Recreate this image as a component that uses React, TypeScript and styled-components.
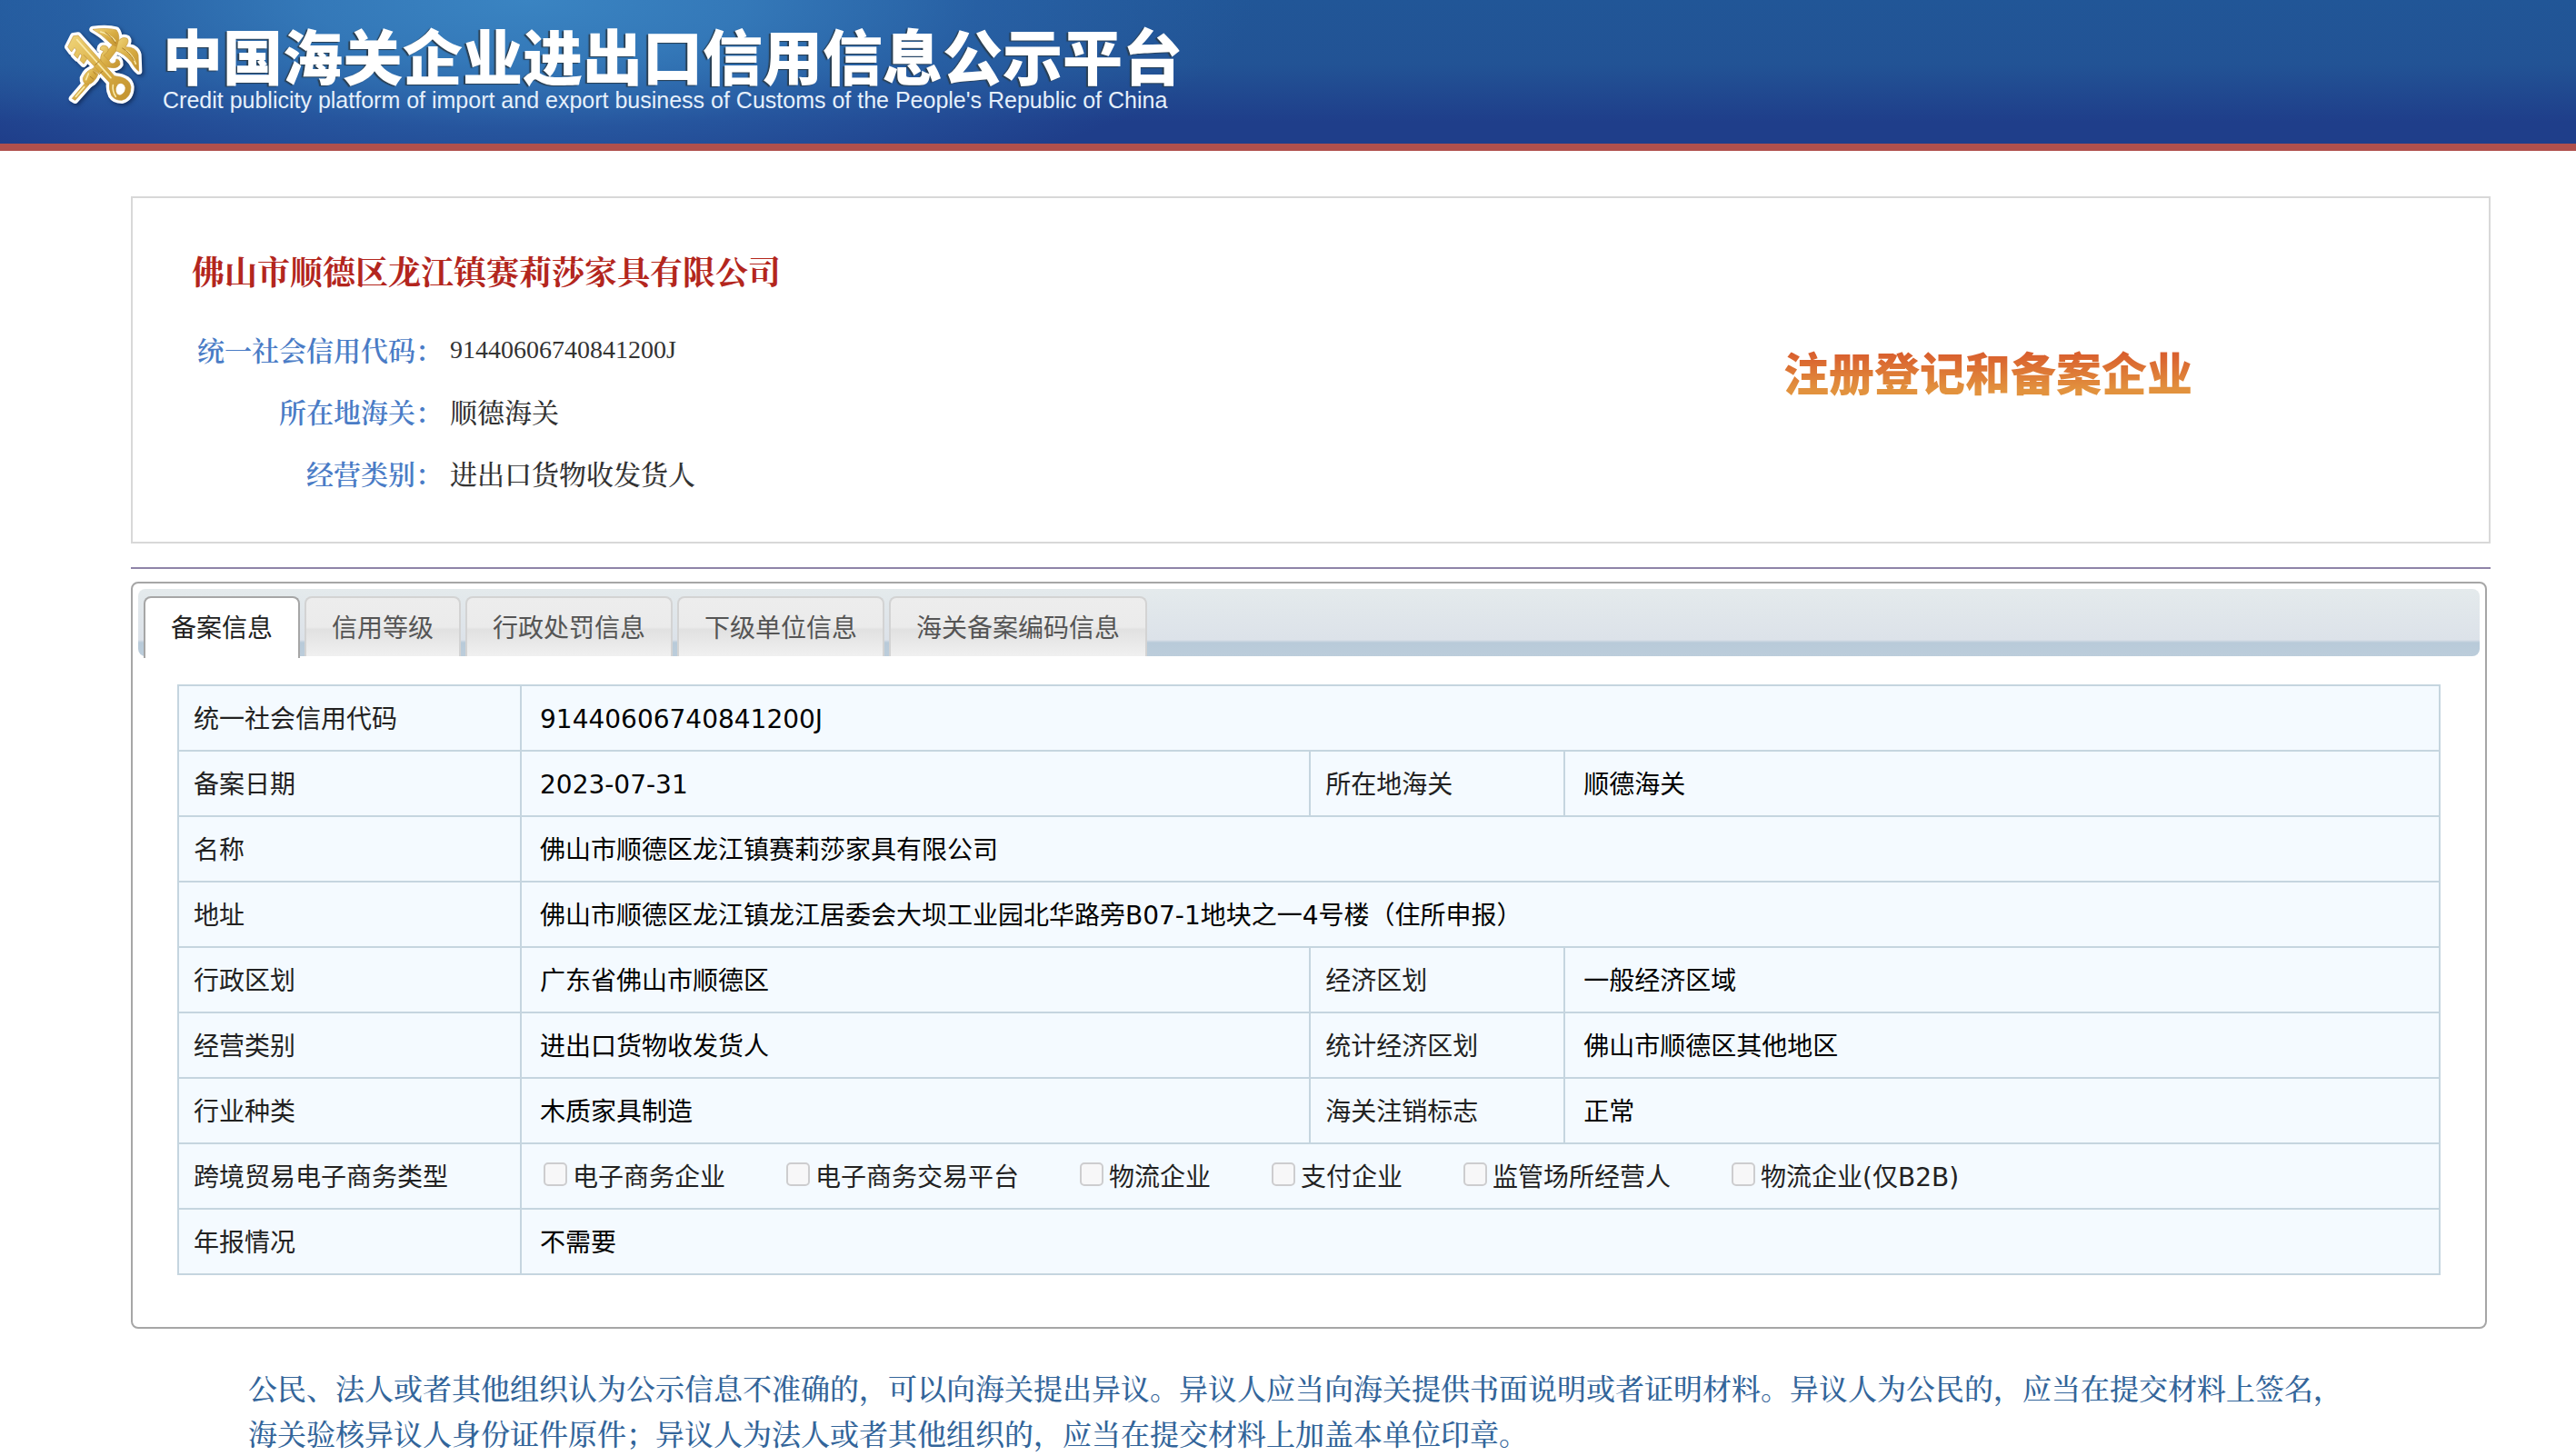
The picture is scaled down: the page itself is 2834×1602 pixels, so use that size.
import React, { useState } from "react";
import styled, { createGlobalStyle, css } from "styled-components";

const serif = `"Liberation Serif", "Songti SC", "Noto Serif CJK SC", "Noto Sans CJK SC", serif`;
const sans = `"DejaVu Sans", "Noto Sans CJK SC", sans-serif`;

const GlobalStyle = createGlobalStyle`
  *, *::before, *::after { box-sizing: border-box; }
  body { margin: 0; background: #fff; }
`;

const Header = styled.header`
  display: flex;
  align-items: flex-start;
  gap: 21px;
  padding: 27px 70px 29px;
  border-bottom: 8px solid #b0504c;
  background:
    radial-gradient(ellipse 800px 230px at 580px 0, #3a84c2 0%, rgba(54, 124, 188, 0.9) 30%, rgba(44, 104, 174, 0.55) 62%, rgba(32, 80, 148, 0) 100%),
    linear-gradient(#215697, #225395 45%, #1f3e8a 85%, #1f3e8a);
`;

const Emblem = styled.svg`
  flex: none;
  width: 88px;
  height: 88px;
  filter: drop-shadow(2px 2px 2px rgba(10, 25, 60, 0.6));
`;

const Brand = styled.div`
  display: flex;
  flex-direction: column;
  white-space: nowrap;
`;

const BrandName = styled.h1`
  margin: 0;
  font: 900 66px/64px "Noto Sans CJK SC", sans-serif;
  color: #fff;
  text-shadow: -2px 1px 1px #2a3f52;
`;

const BrandSub = styled.p`
  margin: 0;
  font: 400 25px/38px "Liberation Sans", sans-serif;
  color: #e6f0fb;
`;

const Main = styled.main`
  padding: 50px 94px 0 144px;
`;

const Summary = styled.section`
  display: grid;
  grid-template-columns: 1fr 776px;
  padding: 61px 0 39px 65px;
  border: 2px solid #d8d8d8;
`;

const Company = styled.h2`
  margin: 0 0 30px;
  font: 700 36px/44px ${serif};
  color: #b3261d;
`;

const Facts = styled.dl`
  display: grid;
  grid-template-columns: 276px 1fr;
  column-gap: 8px;
  margin: 0;
  font-family: ${serif};
  font-weight: 500;
  line-height: 68px;
`;

const FactName = styled.dt`
  font-size: 30px;
  font-weight: 600;
  text-align: right;
  color: #4a7cc6;
`;

const FactValue = styled.dd<{ $code?: boolean }>`
  margin: 0;
  font-size: ${(p) => (p.$code ? 28 : 30)}px;
  line-height: ${(p) => (p.$code ? 64 : 68)}px;
  color: #333;
`;

const Badge = styled.strong`
  align-self: center;
  justify-self: start;
  margin-bottom: 20px;
  font: 900 50px/60px "Noto Sans CJK SC", sans-serif;
  color: transparent;
  background: linear-gradient(#d9602e 20%, #e2923e 85%);
  background-clip: text;
  -webkit-background-clip: text;
`;

const Divider = styled.hr`
  height: 2px;
  margin: 26px 0 14px;
  border: 0;
  background: #8f84a8;
`;

const Panel = styled.section`
  margin-right: 4px;
  padding: 6px 6px 57px;
  border: 2px solid #a6a6a6;
  border-radius: 8px;
`;

const TabStrip = styled.div`
  display: flex;
  gap: 5px;
  height: 74px;
  padding: 8px 6px 0;
  border-radius: 8px;
  background: linear-gradient(#e4eaec, #dce2e9 56px, #b8cad9 59px, #bccddb);
`;

const Tab = styled.button<{ $active: boolean }>`
  height: 66px;
  padding: 4px 28px 0;
  border: 2px solid #d3d3d3;
  border-bottom: 0;
  border-radius: 8px 8px 0 0;
  font: 400 28px/40px ${sans};
  color: #555;
  background: linear-gradient(#ededed, #ebebeb 50%, #e1e1e1 54%, #f0f0f0);
  ${(p) =>
    p.$active &&
    css`
      height: 68px;
      padding-bottom: 2px;
      border-color: #a6a6a6;
      color: #212121;
      background: #fff;
    `}
`;

const TableWrap = styled.div`
  padding: 31px 43px 0;
`;

const Table = styled.table`
  width: 100%;
  table-layout: fixed;
  border-collapse: collapse;
  background: #f4faff;
  font: 400 28px/40px ${sans};
`;

const Col = styled.col<{ $width?: string }>`
  width: ${(p) => p.$width ?? "auto"};
`;

const Label = styled.th`
  height: 72px;
  padding: 4px 16px 0;
  border: 2px solid #c5d5df;
  font-weight: 400;
  text-align: left;
  color: #222;
`;

const Value = styled.td`
  height: 72px;
  padding: 4px 20px 0;
  border: 2px solid #c5d5df;
  color: #000;
`;

const Options = styled.div`
  display: flex;
  gap: 67px;
  padding-left: 4px;
  white-space: nowrap;
`;

const Option = styled.label`
  display: flex;
  gap: 6px;
  color: #222;
`;

const Check = styled.input`
  appearance: none;
  flex: none;
  width: 26px;
  height: 26px;
  margin: 3px 0 0;
  border: 2px solid #cdcdcf;
  border-radius: 5px;
  background: #f7f7f8;
`;

const Notice = styled.p`
  margin: 0;
  padding: 42px 150px 0 129px;
  font: 500 32px/50px ${serif};
  color: #33659a;
`;

const KeyAndWings = () => (
  <>
    <path d="M86 294 L132 240 L142 248 L96 300 Z" />
    <path d="M122 226 Q134 200 154 196 L172 214 Q158 246 136 248 Q120 244 122 226 Z" />
    <path d="M154 196 L230 104 L246 118 L174 212 Z" />
    <path d="M154 66 Q204 60 232 68 Q246 84 238 124 Q220 122 202 102 Q186 84 154 66 Z" />
    <path d="M238 106 Q250 88 268 96 Q276 106 262 124 Q298 124 304 150 L306 204 Q294 196 282 174 Q260 146 230 136 Z" />
    <path d="M178 132 Q180 116 196 120 Q212 126 202 142 L190 152 Q206 164 214 178 Q230 182 232 164 Q244 164 244 182 Q236 196 212 192 L186 188 Q172 156 190 138 Z" />
    <path fillRule="evenodd" d="M106 86 L226 220 Q276 224 280 256 Q280 292 250 300 Q226 300 216 284 Q206 262 210 242 L124 150 L136 162 L124 180 L112 168 L118 152 L112 146 L104 162 L92 150 L100 134 L94 126 L84 140 L72 124 L90 88 Z M238 246 Q256 240 262 258 Q262 276 244 284 Q228 280 230 262 Z" />
  </>
);

const CustomsEmblem = () => (
  <Emblem viewBox="58 50 264 264" role="img" aria-label="海关关徽">
    <defs>
      <linearGradient id="gold" x1="0" y1="0" x2="1" y2="1">
        <stop offset="0" stopColor="#f0d57a" />
        <stop offset="0.5" stopColor="#d9ae45" />
        <stop offset="1" stopColor="#c2922f" />
      </linearGradient>
    </defs>
    <g fill="#fff" stroke="#fff" strokeWidth="22" strokeLinejoin="round">
      <KeyAndWings />
    </g>
    <g fill="url(#gold)" stroke="#c2953a" strokeWidth="2" strokeLinejoin="round">
      <KeyAndWings />
    </g>
    <ellipse cx="246" cy="262" rx="14" ry="17" fill="#fff" />
    <g fill="none" stroke="#f9e9a8" strokeWidth="5" strokeLinecap="round">
      <path d="M102 100 L214 226" />
      <path d="M180 74 Q212 82 228 104" />
      <path d="M264 136 Q286 150 296 180" />
      <path d="M221 250 Q218 270 230 288" />
      <path d="M140 212 L132 232" />
      <path d="M98 288 L126 256" />
    </g>
    <g fill="none" stroke="#a97b2a" strokeWidth="3" strokeLinecap="round">
      <path d="M196 76 Q218 90 230 112" />
      <path d="M252 128 Q276 142 290 168" />
      <path d="M156 206 L164 214 M146 222 L156 230" />
      <path d="M174 172 L162 184 M186 204 L176 214" />
    </g>
  </Emblem>
);

const tabs = ["备案信息", "信用等级", "行政处罚信息", "下级单位信息", "海关备案编码信息"];

const ecommerceTypes = [
  "电子商务企业",
  "电子商务交易平台",
  "物流企业",
  "支付企业",
  "监管场所经营人",
  "物流企业(仅B2B)",
];

const rows: [string, React.ReactNode, string?, string?][] = [
  ["统一社会信用代码", "91440606740841200J"],
  ["备案日期", "2023-07-31", "所在地海关", "顺德海关"],
  ["名称", "佛山市顺德区龙江镇赛莉莎家具有限公司"],
  ["地址", "佛山市顺德区龙江镇龙江居委会大坝工业园北华路旁B07-1地块之一4号楼（住所申报）"],
  ["行政区划", "广东省佛山市顺德区", "经济区划", "一般经济区域"],
  ["经营类别", "进出口货物收发货人", "统计经济区划", "佛山市顺德区其他地区"],
  ["行业种类", "木质家具制造", "海关注销标志", "正常"],
  [
    "跨境贸易电子商务类型",
    <Options>
      {ecommerceTypes.map((t) => (
        <Option key={t}>
          <Check type="checkbox" disabled />
          {t}
        </Option>
      ))}
    </Options>,
  ],
  ["年报情况", "不需要"],
];

export default function App() {
  const [active, setActive] = useState(0);
  return (
    <>
      <GlobalStyle />
      <Header>
        <CustomsEmblem />
        <Brand>
          <BrandName>中国海关企业进出口信用信息公示平台</BrandName>
          <BrandSub>
            Credit publicity platform of import and export business of Customs of the People's Republic of China
          </BrandSub>
        </Brand>
      </Header>
      <Main>
        <Summary>
          <div>
            <Company>佛山市顺德区龙江镇赛莉莎家具有限公司</Company>
            <Facts>
              <FactName>统一社会信用代码：</FactName>
              <FactValue $code>91440606740841200J</FactValue>
              <FactName>所在地海关：</FactName>
              <FactValue>顺德海关</FactValue>
              <FactName>经营类别：</FactName>
              <FactValue>进出口货物收发货人</FactValue>
            </Facts>
          </div>
          <Badge>注册登记和备案企业</Badge>
        </Summary>
        <Divider />
        <Panel>
          <TabStrip role="tablist">
            {tabs.map((t, i) => (
              <Tab key={t} type="button" role="tab" aria-selected={i === active} $active={i === active} onClick={() => setActive(i)}>
                {t}
              </Tab>
            ))}
          </TabStrip>
          <TableWrap>
            <Table>
              <colgroup>
                <Col $width="377px" />
                <Col $width="34.9%" />
                <Col $width="280px" />
                <Col />
              </colgroup>
              <tbody>
                {rows.map(([name, value, name2, value2]) => (
                  <tr key={name}>
                    <Label scope="row">{name}</Label>
                    <Value colSpan={name2 ? 1 : 3}>{value}</Value>
                    {name2 && <Label scope="row">{name2}</Label>}
                    {name2 && <Value>{value2}</Value>}
                  </tr>
                ))}
              </tbody>
            </Table>
          </TableWrap>
        </Panel>
        <Notice>
          公民、法人或者其他组织认为公示信息不准确的，可以向海关提出异议。异议人应当向海关提供书面说明或者证明材料。异议人为公民的，应当在提交材料上签名，海关验核异议人身份证件原件；异议人为法人或者其他组织的，应当在提交材料上加盖本单位印章。
        </Notice>
      </Main>
    </>
  );
}
